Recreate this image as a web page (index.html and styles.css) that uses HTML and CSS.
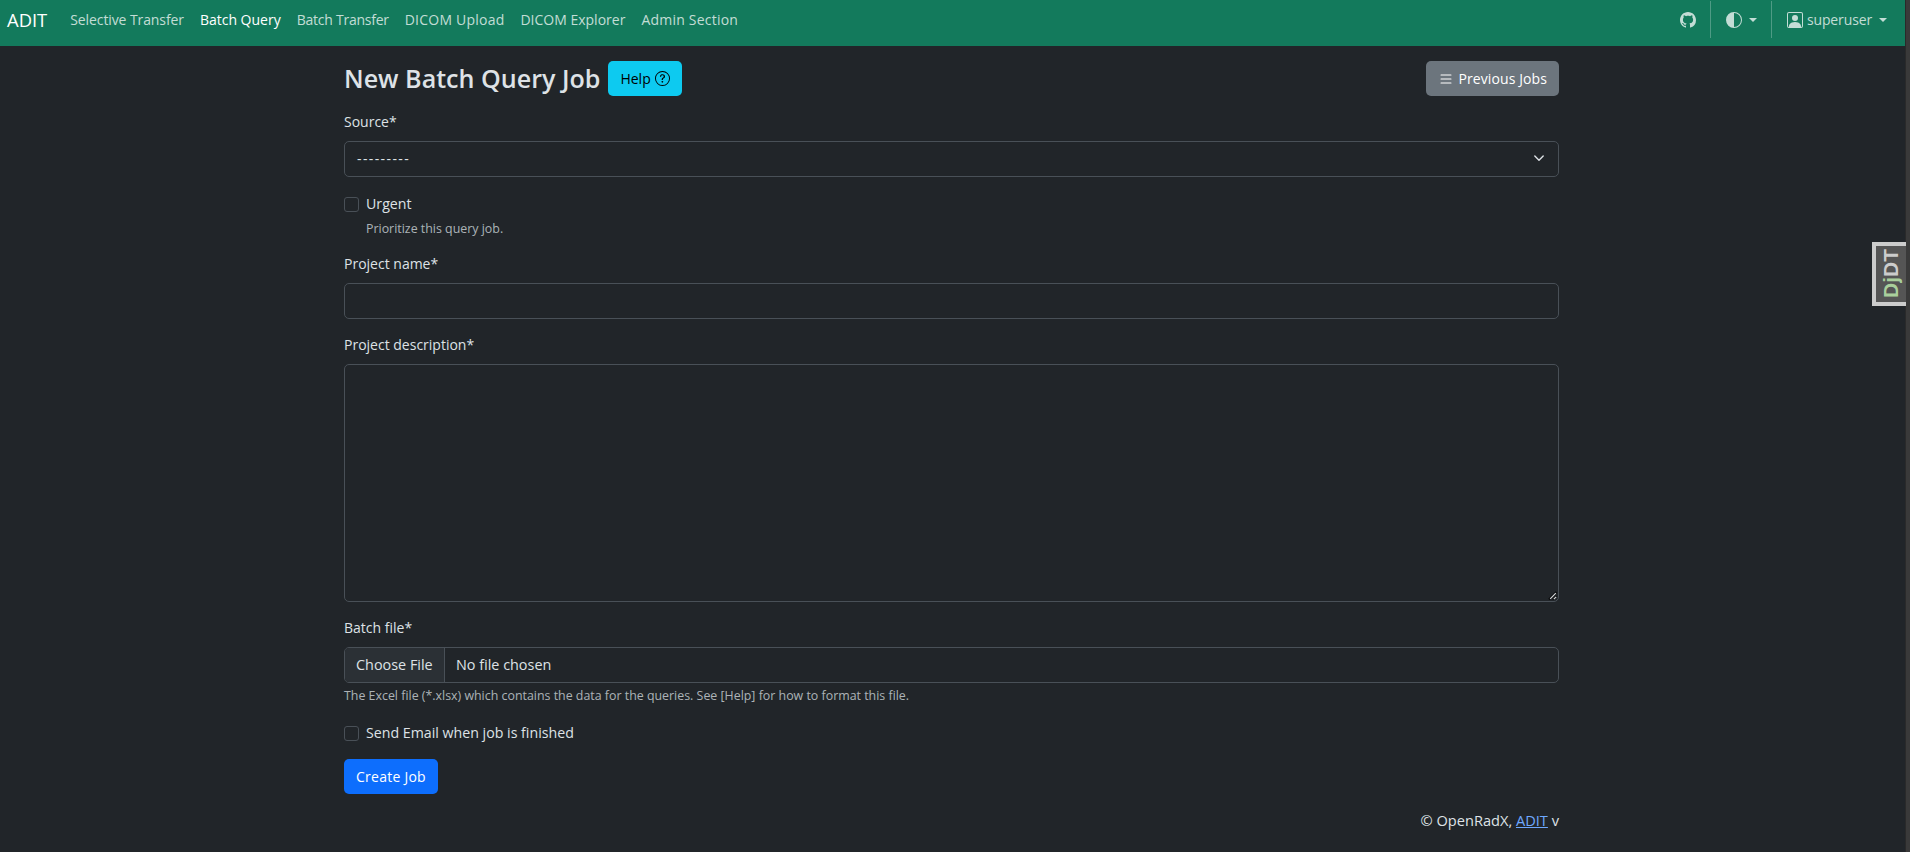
FILE: index.html
```html
<!DOCTYPE html>
<html lang="en">
<head>
<meta charset="utf-8">
<title>New Batch Query Job</title>
<link rel="stylesheet" href="styles.css">
</head>
<body>
<div class="page">
<nav class="navbar">
  <div class="nav-left">
    <a class="brand">ADIT</a>
    <a class="nav-link narrow">Selective Transfer</a>
    <a class="nav-link active">Batch Query</a>
    <a class="nav-link narrower">Batch Transfer</a>
    <a class="nav-link wide">DICOM Upload</a>
    <a class="nav-link">DICOM Explorer</a>
    <a class="nav-link wide">Admin Section</a>
  </div>
  <div class="nav-right">
    <a class="nav-icon github">
      <svg width="16" height="16" viewBox="0 0 16 16" fill="currentColor"><path d="M8 0C3.58 0 0 3.58 0 8c0 3.54 2.29 6.53 5.47 7.59.4.07.55-.17.55-.38 0-.19-.01-.82-.01-1.49-2.01.37-2.53-.49-2.69-.94-.09-.23-.48-.94-.82-1.13-.28-.15-.68-.52-.01-.53.63-.01 1.08.58 1.23.82.72 1.21 1.87.87 2.33.66.07-.52.28-.87.51-1.07-1.78-.2-3.64-.89-3.64-3.95 0-.87.31-1.59.82-2.15-.08-.2-.36-1.02.08-2.12 0 0 .67-.21 2.2.82.64-.18 1.32-.27 2-.27s1.36.09 2 .27c1.53-1.04 2.2-.82 2.2-.82.44 1.1.16 1.92.08 2.12.51.56.82 1.27.82 2.15 0 3.07-1.87 3.75-3.65 3.95.29.25.54.73.54 1.48 0 1.07-.01 1.93-.01 2.2 0 .21.15.46.55.38A8.01 8.01 0 0 0 16 8c0-4.42-3.58-8-8-8"/></svg>
    </a>
    <span class="divider"></span>
    <a class="nav-icon theme">
      <svg width="16" height="16" viewBox="0 0 16 16" fill="currentColor"><path d="M8 15A7 7 0 1 0 8 1zm0 1A8 8 0 1 1 8 0a8 8 0 0 1 0 16"/></svg>
      <span class="caret"></span>
    </a>
    <span class="divider"></span>
    <a class="nav-icon user">
      <svg width="16" height="16" viewBox="0 0 16 16" fill="currentColor"><path d="M11 6a3 3 0 1 1-6 0 3 3 0 0 1 6 0"/><path d="M2 0a2 2 0 0 0-2 2v12a2 2 0 0 0 2 2h12a2 2 0 0 0 2-2V2a2 2 0 0 0-2-2zm12 1a1 1 0 0 1 1 1v12a1 1 0 0 1-1 1v-1c0-1-1-4-6-4s-6 3-6 4v1a1 1 0 0 1-1-1V2a1 1 0 0 1 1-1z"/></svg>
      <span class="username">superuser</span>
      <span class="caret"></span>
    </a>
  </div>
</nav>
<main class="container">
  <header class="title-row">
    <div class="title-left">
      <h1 class="title">New Batch Query Job</h1>
      <a class="btn btn-info">Help
        <svg width="15" height="15" viewBox="0 0 16 16" fill="currentColor"><path d="M8 15A7 7 0 1 1 8 1a7 7 0 0 1 0 14m0 1A8 8 0 1 0 8 0a8 8 0 0 0 0 16"/><path d="M5.255 5.786a.237.237 0 0 0 .241.247h.825c.138 0 .248-.113.266-.25.09-.656.54-1.134 1.342-1.134.686 0 1.314.343 1.314 1.168 0 .635-.374.927-.965 1.371-.673.489-1.206 1.06-1.168 1.987l.003.217a.25.25 0 0 0 .25.246h.811a.25.25 0 0 0 .25-.25v-.105c0-.718.273-.927 1.01-1.486.609-.463 1.244-.977 1.244-2.056 0-1.511-1.276-2.241-2.673-2.241-1.267 0-2.655.59-2.75 2.286m1.557 5.763c0 .533.425.927 1.01.927.609 0 1.028-.394 1.028-.927 0-.552-.42-.94-1.029-.94-.584 0-1.009.388-1.009.94"/></svg>
      </a>
    </div>
    <a class="btn btn-secondary">
      <svg width="16" height="16" viewBox="0 0 16 16" fill="currentColor"><path fill-rule="evenodd" d="M2.5 12a.5.5 0 0 1 .5-.5h10a.5.5 0 0 1 0 1H3a.5.5 0 0 1-.5-.5m0-4a.5.5 0 0 1 .5-.5h10a.5.5 0 0 1 0 1H3a.5.5 0 0 1-.5-.5m0-4a.5.5 0 0 1 .5-.5h10a.5.5 0 0 1 0 1H3a.5.5 0 0 1-.5-.5"/></svg>
      Previous Jobs
    </a>
  </header>
  <form class="form">
    <div class="field">
      <label class="label">Source*</label>
      <div class="control select"><span class="dashes">---------</span>
        <svg width="16" height="16" viewBox="0 0 16 16" fill="none" stroke="#dee2e6" stroke-width="2" stroke-linecap="round" stroke-linejoin="round"><path d="m2 5 6 6 6-6" transform="translate(2.4 1.6) scale(.7)"/></svg>
      </div>
    </div>
    <div class="field check-field">
      <div class="check-row"><span class="checkbox"></span><span>Urgent</span></div>
      <div class="help indent">Prioritize this query job.</div>
    </div>
    <div class="field">
      <label class="label">Project name*</label>
      <div class="control"></div>
    </div>
    <div class="field">
      <label class="label">Project description*</label>
      <div class="control textarea">
        <svg class="grip" width="9" height="9" viewBox="0 0 9 9" stroke-width="1.2"><path d="M8.5 1 1 8.5M8.5 5 5 8.5" stroke="#0b0c0d" stroke-width="2.2"/><path d="M7.8 2.2 2.2 7.8M8.2 5.8 5.8 8.2" stroke="#d6d8da"/></svg>
      </div>
    </div>
    <div class="field file-field">
      <label class="label">Batch file*</label>
      <div class="control file"><span class="file-btn">Choose File</span><span class="file-name">No file chosen</span></div>
      <div class="help top">The Excel file (*.xlsx) which contains the data for the queries. See [Help] for how to format this file.</div>
    </div>
    <div class="field">
      <div class="check-row"><span class="checkbox"></span><span>Send Email when job is finished</span></div>
    </div>
    <div><a class="btn btn-primary">Create Job</a></div>
  </form>
  <footer class="footer">© OpenRadX, <a class="link">ADIT</a> v</footer>
</main>
<aside class="djdt"><span class="dj">Dj</span><span>DT</span></aside>
</div>
</body>
</html>
```
FILE: styles.css
```css
* { box-sizing: border-box; }
html, body { margin: 0; height: 100%; overflow: hidden; }
body {
  background: #3a3a3a;
  color: #dee2e6;
  font-family: "Open Sans", "Noto Sans", "Liberation Sans", sans-serif;
  font-size: 14px;
  line-height: 24px;
}
.page { width: 1906px; height: 852px; background: #212529; position: relative; border-right: 1px solid #2a2a2a; }
.navbar {
  height: 46px;
  background: #137a5c;
  display: flex;
  align-items: flex-start;
  justify-content: space-between;
  padding: 1px 18px 0 7px;
}
.nav-left { display: flex; align-items: center; height: 37px; gap: 16px; }
.brand { font-size: 18.4px; color: #fff; margin-right: 7px; }
.nav-link { color: rgba(255,255,255,.75); }
.nav-link.active { color: #fff; }
.nav-link.narrow { letter-spacing: -.1px; }
.nav-link.narrower { letter-spacing: -.25px; }
.nav-link.wide { letter-spacing: .22px; }
.nav-right { display: flex; align-items: center; height: 37px; color: rgba(255,255,255,.75); }
.nav-icon { display: flex; align-items: center; gap: 4px; }
.username { letter-spacing: -.13px; }
.divider { width: 1px; height: 37px; background: rgba(255,255,255,.25); }
.github { margin-right: 14px; }
.theme { margin: 0 14px 0 15px; gap: 7px; }
.user { margin-left: 15px; }
.caret { width: 0; height: 0; border-left: 4px solid transparent; border-right: 4px solid transparent; border-top: 4px solid currentColor; margin-left: 3px; }
.theme .caret { margin-left: 0; }
.container { width: 1215px; margin-left: 344px; }
.title-row { display: flex; align-items: center; justify-content: space-between; margin-top: 15px; height: 35px; }
.title-left { display: flex; align-items: center; gap: 8px; }
.title { margin: 0 0 2px; font-size: 25.1px; font-weight: 600; color: #dee2e6; line-height: 30px; }
.btn { display: inline-flex; align-items: center; justify-content: center; gap: 4px; height: 35px; padding: 0 12px; border-radius: 5px; }
.btn-info { background: #0dcaf0; color: #000; }
.btn-secondary { background: #6c757d; color: #fff; letter-spacing: .1px; }
.btn-primary { background: #0d6efd; color: #fff; letter-spacing: .25px; }
.form { margin-top: 14px; }
.field { margin-bottom: 14px; }
.label { display: block; height: 24px; margin-bottom: 7px; color: #dee2e6; }
.control { border: 1px solid #495057; border-radius: 5px; height: 36px; background: #212529; position: relative; }
.select { display: flex; align-items: center; justify-content: space-between; padding: 0 11px 0 12px; }
.dashes { letter-spacing: 1.4px; }
.textarea { height: 238px; }
.grip { position: absolute; right: 1px; bottom: 1px; }
.check-field { margin-top: 15px; }
.check-row { display: flex; align-items: center; gap: 7px; height: 24px; font-size: 14.2px; }
.checkbox { width: 15px; height: 15px; border: 1px solid #495057; border-radius: 3px; flex: none; }
.help { font-size: 12.4px; color: rgba(222,226,230,.75); line-height: 18px; }
.help.indent { padding-left: 22px; margin-top: 4px; }
.help.top { margin-top: 4px; }
.file-field { margin-bottom: 16px; }
.file { display: flex; align-items: stretch; overflow: hidden; font-size: 14.4px; }
.file-btn { background: #2b3035; border-right: 1px solid #495057; padding: 0 11px; display: flex; align-items: center; width: 100px; }
.file-name { padding: 0 11px; display: flex; align-items: center; }
.footer { text-align: right; margin-top: 14px; font-size: 14.6px; }
.link { color: #6ea8fe; text-decoration: underline; }
.djdt { position: absolute; right: -1px; top: 242px; width: 34px; height: 64px; background: #555; border: 4px solid #ccc; border-left: 0; display: flex; align-items: center; justify-content: center; writing-mode: vertical-rl; transform: rotate(180deg); transform-origin: center; font-family: "Liberation Sans", sans-serif; font-weight: 700; font-size: 21px; line-height: 30px; color: #ccc; }
.dj { color: #a9cf9c; }
```
